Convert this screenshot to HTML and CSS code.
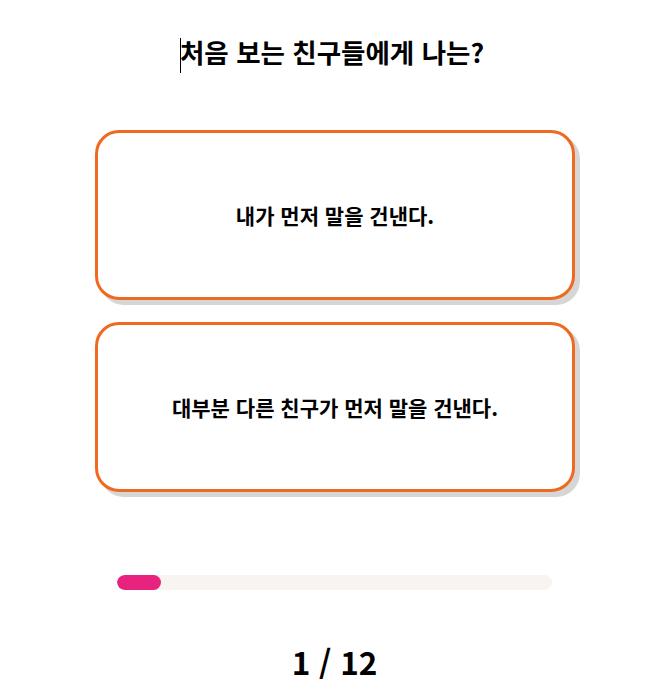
FILE: index.html
```html
<!DOCTYPE html>
<html lang="ko">
<head>
    <meta charset="UTF-8">
    <meta name="viewport" content="width=device-width, initial-scale=1.0">
    <title>질문</title>
    <link rel="stylesheet" href="styles.css">
</head>
<body>
    <main class="quiz">
        <h1 class="question"><span class="caret"></span>처음 보는 친구들에게 나는?</h1>

        <div class="answers">
            <button class="answer">내가 먼저 말을 건낸다.</button>
            <button class="answer">대부분 다른 친구가 먼저 말을 건낸다.</button>
        </div>

        <div class="progress">
            <div class="progress-bar" style="width: 10%"></div>
        </div>

        <p class="count">1 / 12</p>
    </main>
</body>
</html>
```

FILE: styles.css
```css
body {
    font-family: "Noto Sans CJK KR", "Noto Sans", sans-serif;
    margin: 0;
    padding: 0;
    background: #fff;
    color: #000;
}
.quiz {
    display: flex;
    flex-direction: column;
    align-items: center;
    padding-top: 30px;
}
.question {
    font-size: 26.5px;
    font-weight: 700;
    margin: 0;
    line-height: 44px;
}
.caret {
    display: inline-block;
    width: 1px;
    height: 35px;
    background: #000;
    vertical-align: middle;
    margin-right: -1px;
}
.answers {
    display: flex;
    flex-direction: column;
    gap: 22px;
    margin-top: 56px;
    margin-left: 6px;
}
.answer {
    width: 480px;
    height: 170px;
    background: #fff;
    border: 3px solid #ef6a1f;
    border-radius: 24px;
    box-shadow: 5px 5px 0 #d6d6d6;
    font-family: inherit;
    font-size: 21px;
    font-weight: 700;
    color: #000;
    cursor: pointer;
}
.progress {
    width: 435px;
    height: 15px;
    margin-top: 83px;
    margin-left: 5px;
    background: #f8f5f0;
    border-radius: 8px;
    overflow: hidden;
}
.progress-bar {
    height: 100%;
    background: #e8237f;
    border-radius: 8px;
}
.count {
    font-size: 31.5px;
    font-weight: 700;
    margin: 49px 0 0;
    line-height: 44px;
    margin-left: 5px;
}
```
